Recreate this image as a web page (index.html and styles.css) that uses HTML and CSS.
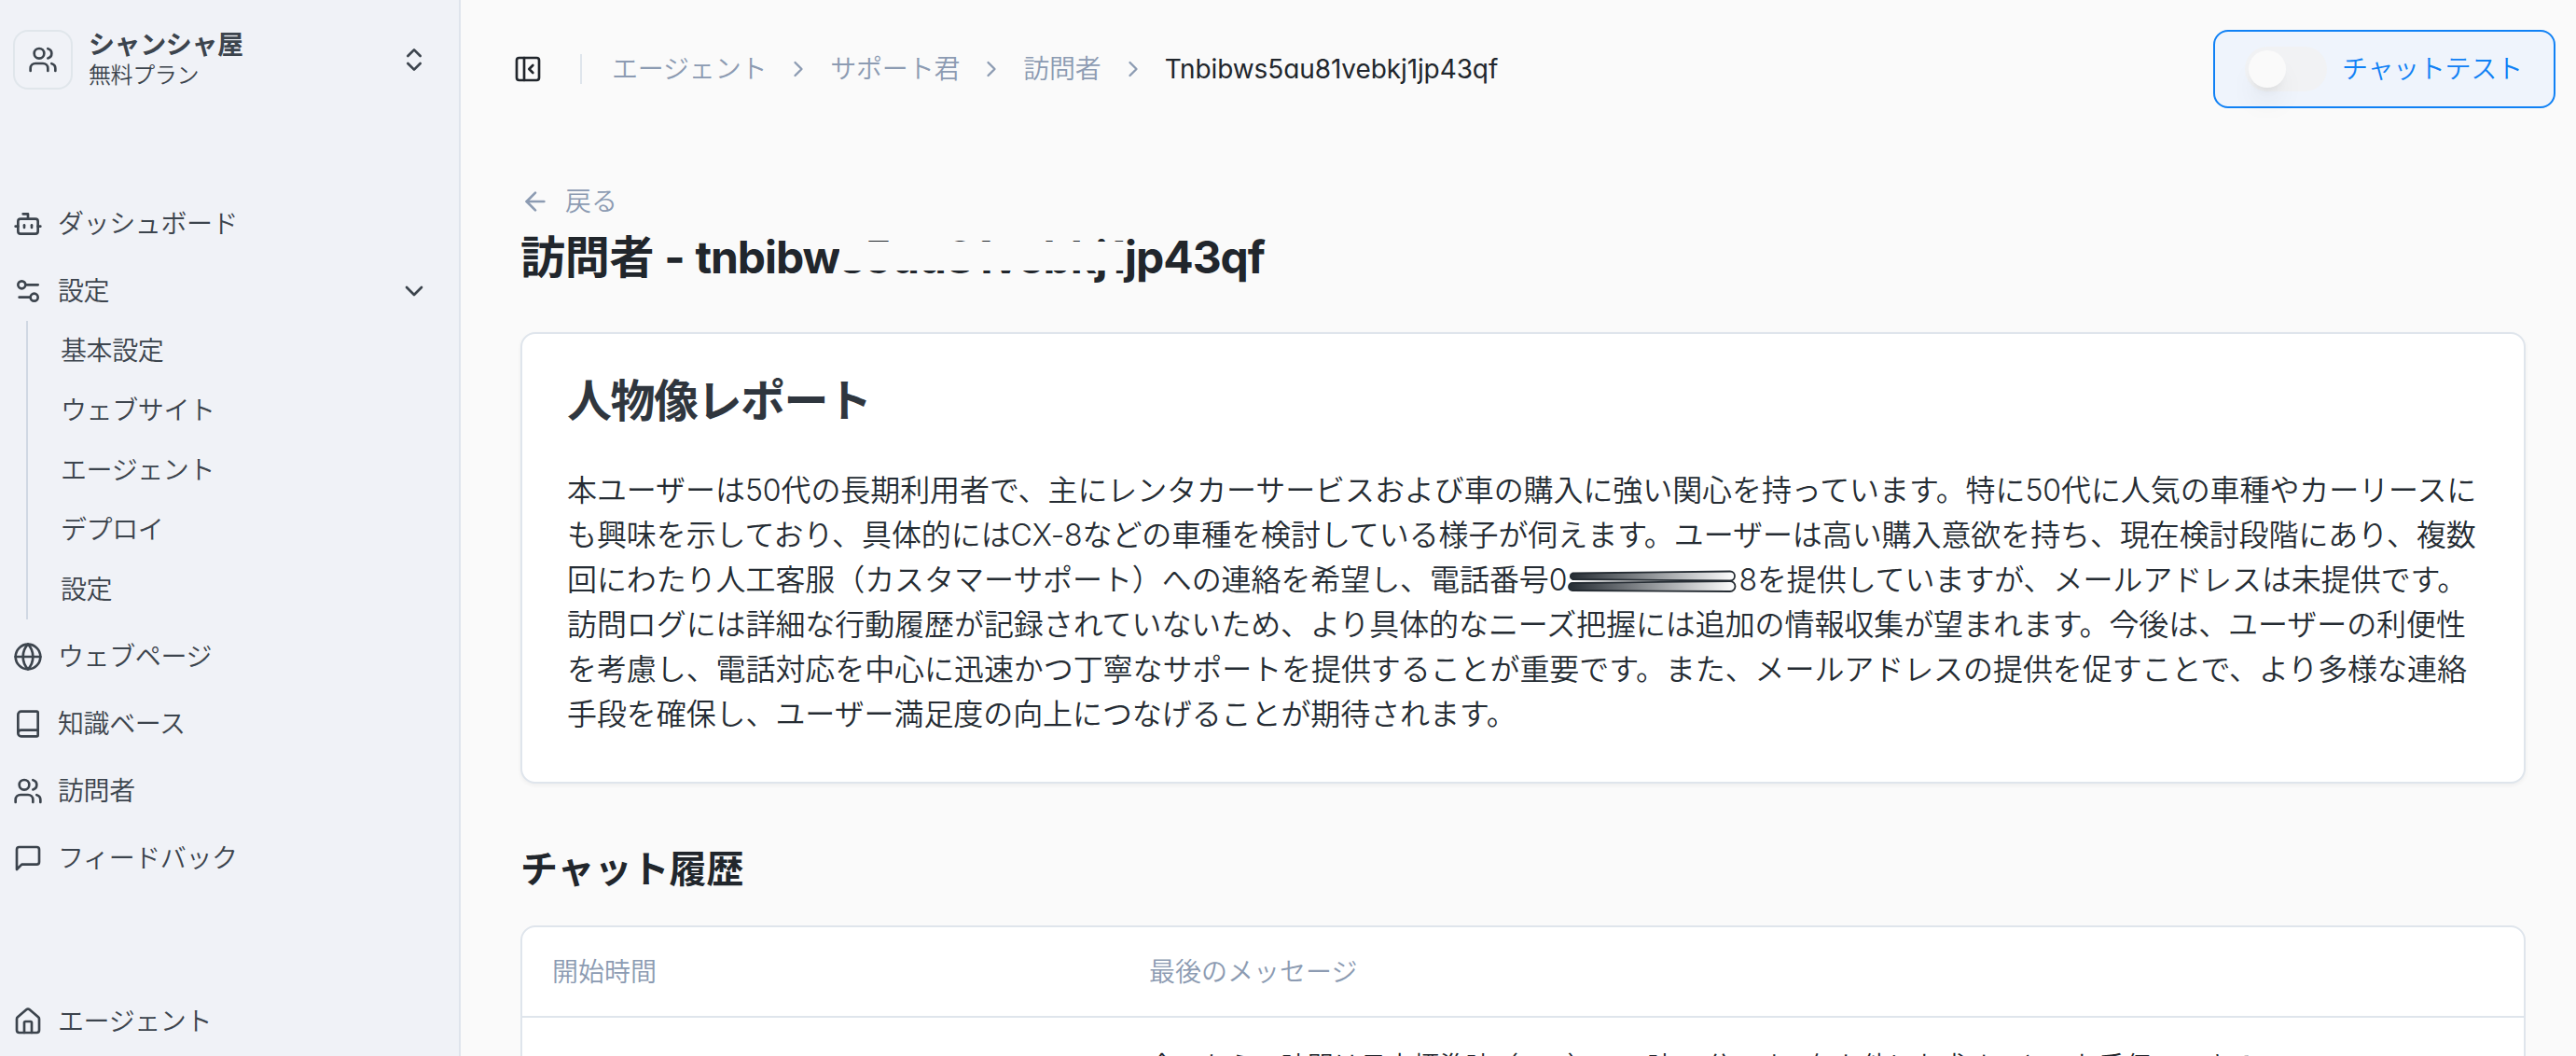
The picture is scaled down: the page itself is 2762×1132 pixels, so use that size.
FILE: index.html
```
<!DOCTYPE html>
<html lang="ja">
<head>
  <meta charset="UTF-8">
  <meta name="viewport" content="width=device-width, initial-scale=1.0">
  <title>訪問者</title>
  <link rel="stylesheet" href="styles.css">
</head>
<body>
  <svg class="sprite">
    <symbol id="users" viewBox="0 0 24 24"><path d="M16 21v-2a4 4 0 0 0-4-4H6a4 4 0 0 0-4 4v2"/><circle cx="9" cy="7" r="4"/><path d="M22 21v-2a4 4 0 0 0-3-3.87"/><path d="M16 3.13a4 4 0 0 1 0 7.75"/></symbol>
    <symbol id="chevron-right" viewBox="0 0 24 24"><path d="m9 18 6-6-6-6"/></symbol>
  </svg>

  <aside class="sidebar">
    <div class="team">
      <div class="team-logo"><svg class="icon"><use href="#users"/></svg></div>
      <div class="team-info">
        <strong>シャンシャ屋</strong>
        <span>無料プラン</span>
      </div>
      <svg class="icon" viewBox="0 0 24 24"><path d="m7 15 5 5 5-5"/><path d="m7 9 5-5 5 5"/></svg>
    </div>

    <nav class="menu">
      <a class="menu-item">
        <svg class="icon" viewBox="0 0 24 24"><path d="M12 8V4H8"/><rect width="16" height="12" x="4" y="8" rx="2"/><path d="M2 14h2"/><path d="M20 14h2"/><path d="M15 13v2"/><path d="M9 13v2"/></svg>
        ダッシュボード
      </a>
      <a class="menu-item">
        <svg class="icon" viewBox="0 0 24 24"><path d="M20 7h-9"/><path d="M14 17H5"/><circle cx="17" cy="17" r="3"/><circle cx="7" cy="7" r="3"/></svg>
        設定
        <svg class="icon arrow" viewBox="0 0 24 24"><path d="m6 9 6 6 6-6"/></svg>
      </a>
      <div class="submenu">
        <a>基本設定</a>
        <a>ウェブサイト</a>
        <a>エージェント</a>
        <a>デプロイ</a>
        <a>設定</a>
      </div>
      <a class="menu-item">
        <svg class="icon" viewBox="0 0 24 24"><circle cx="12" cy="12" r="10"/><path d="M12 2a14.5 14.5 0 0 0 0 20 14.5 14.5 0 0 0 0-20"/><path d="M2 12h20"/></svg>
        ウェブページ
      </a>
      <a class="menu-item">
        <svg class="icon" viewBox="0 0 24 24"><path d="M4 19.5v-15A2.500 2.500 0 0 1 6.500 2H19a1 1 0 0 1 1 1v18a1 1 0 0 1-1 1H6.500a1 1 0 0 1 0-5H20"/></svg>
        知識ベース
      </a>
      <a class="menu-item">
        <svg class="icon"><use href="#users"/></svg>
        訪問者
      </a>
      <a class="menu-item">
        <svg class="icon" viewBox="0 0 24 24"><path d="M21 15a2 2 0 0 1-2 2H7l-4 4V5a2 2 0 0 1 2-2h14a2 2 0 0 1 2 2z"/></svg>
        フィードバック
      </a>
    </nav>

    <a class="menu-item home">
      <svg class="icon" viewBox="0 0 24 24"><path d="M15 21v-8a1 1 0 0 0-1-1h-4a1 1 0 0 0-1 1v8"/><path d="M3 10a2 2 0 0 1 .709-1.528l7-5.999a2 2 0 0 1 2.582 0l7 5.999A2 2 0 0 1 21 10v9a2 2 0 0 1-2 2H5a2 2 0 0 1-2-2z"/></svg>
      エージェント
    </a>
  </aside>

  <main class="main">
    <header class="topbar">
      <svg class="icon panel" viewBox="0 0 24 24"><rect width="18" height="18" x="3" y="3" rx="2"/><path d="M9 3v18"/><path d="m16 15-3-3 3-3"/></svg>
      <div class="divider"></div>
      <div class="breadcrumb">
        <a>エージェント</a>
        <svg class="icon"><use href="#chevron-right"/></svg>
        <a>サポート君</a>
        <svg class="icon"><use href="#chevron-right"/></svg>
        <a>訪問者</a>
        <svg class="icon"><use href="#chevron-right"/></svg>
        <span class="current">Tnbibws5au81vebkj1jp43qf</span>
      </div>
      <button class="chat-test" type="button">
        <span class="switch"><span class="knob"></span></span>
        チャットテスト
      </button>
    </header>

    <a class="back">
      <svg class="icon" viewBox="0 0 24 24"><path d="m12 19-7-7 7-7"/><path d="M19 12H5"/></svg>
      戻る
    </a>
    <h1>訪問者 - <span class="visitor-id">tnbibw<span class="masked">s5au81vebkj1</span>jp43qf</span></h1>

    <section class="card">
      <h2>人物像レポート</h2>
      <p>
        <span>本ユーザーは50代の長期利用者で、主にレンタカーサービスおよび車の購入に強い関心を持っています。特に50代に人気の車種やカーリースに</span>
        <span>も興味を示しており、具体的にはCX-8などの車種を検討している様子が伺えます。ユーザーは高い購入意欲を持ち、現在検討段階にあり、複数</span>
        <span>回にわたり人工客服（カスタマーサポート）への連絡を希望し、電話番号0<svg class="scribble" viewBox="0 0 184 28">
          <defs><linearGradient id="ink"><stop offset="0" stop-color="#252c33"/><stop offset="1" stop-color="#fff"/></linearGradient></defs>
          <path class="ink-bar" d="M6 5.500 L175 3.500 A5 5 0 0 1 175 13.500 L6 12 A3.500 3.500 0 0 1 6 5.500Z"/>
          <path class="ink-bar" d="M6 16 L175 14 A5 5 0 0 1 175 25 L6 24 A4 4 0 0 1 6 16Z"/>
        </svg>8を提供していますが、メールアドレスは未提供です。</span>
        <span>訪問ログには詳細な行動履歴が記録されていないため、より具体的なニーズ把握には追加の情報収集が望まれます。今後は、ユーザーの利便性</span>
        <span>を考慮し、電話対応を中心に迅速かつ丁寧なサポートを提供することが重要です。また、メールアドレスの提供を促すことで、より多様な連絡</span>
        <span>手段を確保し、ユーザー満足度の向上につなげることが期待されます。</span>
      </p>
    </section>

    <h3>チャット履歴</h3>
    <div class="history">
      <div class="history-row history-head">
        <div>開始時間</div>
        <div>最後のメッセージ</div>
      </div>
      <div class="history-row">
        <div></div>
        <div class="message">今こちらの時間は日本標準時（JST）で14時28分です。何か他にお求めことでお手伝いできる</div>
      </div>
    </div>
  </main>
</body>
</html>
```
FILE: styles.css
```
* {
    box-sizing: border-box;
}
body {
    margin: 0;
    display: flex;
    height: 1132px;
    overflow: hidden;
    background-color: #fafafa;
    color: #21262c;
    font-family: Inter, "Noto Sans CJK JP", sans-serif;
    font-feature-settings: "cv11";
    font-size: 28px;
    font-weight: 350;
    line-height: 40px;
    white-space: nowrap;
}
.sprite {
    position: absolute;
    width: 0;
    height: 0;
}
.icon {
    width: 32px;
    height: 32px;
    flex-shrink: 0;
    fill: none;
    stroke: currentColor;
    stroke-width: 2;
    stroke-linecap: round;
    stroke-linejoin: round;
}

/* sidebar */
.sidebar {
    width: 494px;
    flex-shrink: 0;
    padding: 32px 32px 0 14px;
    background-color: #f0f2f7;
    border-right: 2px solid #dfe4ec;
    color: #3c444d;
    letter-spacing: -0.4px;
    display: flex;
    flex-direction: column;
}
.team {
    height: 64px;
    display: flex;
    align-items: center;
    gap: 17px;
}
.team-logo {
    width: 64px;
    height: 64px;
    border: 2px solid #e0e6eb;
    border-radius: 16px;
    display: flex;
    align-items: center;
    justify-content: center;
}
.team-info {
    flex: 1;
    display: flex;
    flex-direction: column;
}
.team-info strong {
    font-size: 28px;
    line-height: 34px;
    font-weight: 700;
}
.team-info span {
    font-size: 24px;
    line-height: 32px;
}
.menu {
    margin-top: 112px;
    display: flex;
    flex-direction: column;
    gap: 8px;
}
.menu-item {
    height: 64px;
    display: flex;
    align-items: center;
    gap: 16px;
}
.arrow {
    margin-left: auto;
}
.submenu {
    margin-left: 14px;
    margin-top: -8px;
    padding-left: 35px;
    border-left: 2px solid #d0d8e3;
}
.submenu a {
    display: block;
    line-height: 64px;
}
.home {
    margin-top: 111px;
}

/* content */
.main {
    flex: 1;
    padding: 0 54px 0 64px;
}
.topbar {
    height: 148px;
    margin-left: -8px;
    margin-right: -32px;
    display: flex;
    align-items: center;
}
.divider {
    width: 2px;
    height: 32px;
    margin: 0 32px 0 40px;
    background-color: #dfe5ec;
}
.breadcrumb {
    display: flex;
    align-items: center;
    gap: 20px;
    color: #8c9bb2;
    letter-spacing: -0.2px;
}
.breadcrumb .icon {
    width: 28px;
    height: 28px;
}
.current {
    color: #21262c;
    font-weight: 400;
    letter-spacing: -0.1px;
}
.chat-test {
    width: 367px;
    height: 84px;
    margin-left: auto;
    padding: 0 0 0 32px;
    display: flex;
    align-items: center;
    gap: 16px;
    border: 2px solid #1081f5;
    border-radius: 16px;
    background-color: #eff4fc;
    color: #1081f5;
    font: inherit;
    letter-spacing: -0.3px;
}
.switch {
    width: 88px;
    height: 48px;
    padding: 4px;
    border-radius: 24px;
    background-color: #f1f2f4;
}
.knob {
    display: block;
    width: 40px;
    height: 40px;
    border-radius: 50%;
    background-color: #fafafa;
    box-shadow: 0 20px 30px -6px rgba(0, 0, 0, 0.08), 0 8px 12px -8px rgba(0, 0, 0, 0.12);
}
.back {
    margin-top: 48px;
    height: 40px;
    display: flex;
    align-items: center;
    gap: 16px;
    color: #8c9bb2;
}
h1 {
    margin: 8px 0 0;
    font-size: 48px;
    line-height: 64px;
    font-weight: 700;
    letter-spacing: -0.3px;
}
.visitor-id {
    letter-spacing: -1.05px;
}
/* id is blanked out except for a sliver at its top and bottom */
.masked {
    position: relative;
}
.masked::after {
    content: "";
    position: absolute;
    left: 0;
    right: 0;
    top: 13px;
    height: 31px;
    background-color: #fafafa;
}
.card {
    height: 484px;
    margin-top: 48px;
    padding: 40px 0 0 48px;
    background-color: #fff;
    border: 2px solid #dfe5ec;
    border-radius: 16px;
    box-shadow: 0 2px 4px rgba(0, 0, 0, 0.05);
}
h2 {
    margin: 0;
    font-size: 48px;
    line-height: 64px;
    letter-spacing: -1.5px;
    color: #2f363e;
}
.card p {
    margin: 40px 0 0;
    font-size: 32px;
    line-height: 48px;
    letter-spacing: -0.08px;
    color: #252c33;
}
.card p span {
    display: block;
}
.scribble {
    width: 184px;
    height: 28px;
    vertical-align: -4px;
}
.ink-bar {
    fill: url(#ink);
    stroke: #252c33;
    stroke-width: 1.8;
}
h3 {
    margin: 62px 0 0;
    font-size: 40px;
    line-height: 60px;
}
.history {
    height: 400px;
    margin-top: 30px;
    background-color: #fff;
    border: 2px solid #dfe5ec;
    border-radius: 16px;
}
.history-row {
    display: grid;
    grid-template-columns: 640px 1fr;
    padding: 32px 0 32px 32px;
}
.history-head {
    height: 97px;
    padding-top: 28px;
    border-bottom: 2px solid #dfe5ec;
    color: #8c9bb2;
}
.message {
    letter-spacing: 0.3px;
}
```
